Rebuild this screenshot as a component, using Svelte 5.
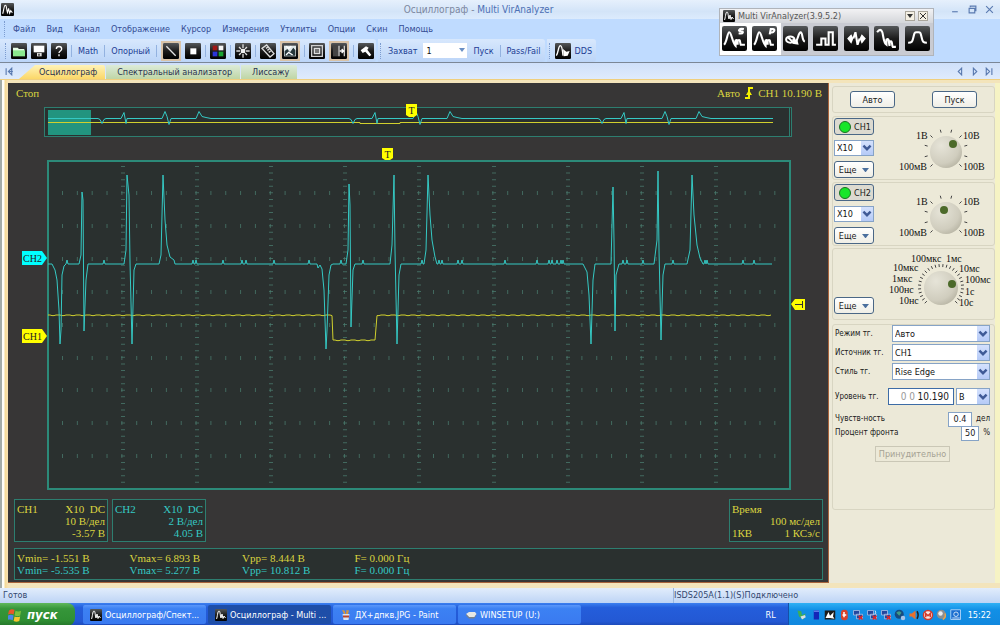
<script lang="ts">
interface Shape {
	d: string;
	fill?: string;
	stroke?: string;
}

interface Tool {
	icon: string;
	label: string;
	active?: boolean;
}

type Point = [number, number];

const menu = ["Файл", "Вид", "Канал", "Отображение", "Курсор", "Измерения", "Утилиты", "Опции", "Скин", "Помощь"];

// Icon shapes on a 24x24 tile
const icons: Record<string, Shape[]> = {
	open: [
		{ d: "M3 7h7l2 2h8v3H3z", fill: "#e9ffe9" },
		{ d: "M3 11h18v9H3z", fill: "#8be88f" },
	],
	save: [
		{ d: "M4 4h16v10H4z", fill: "#fff" },
		{ d: "M9 15h7v5H9z", fill: "#ddd" },
		{ d: "M11 16h2v3h-2z", fill: "#222" },
	],
	help: [{ d: "M8 9c0-5 8-5 8 0 0 3-4 3-4 6M12 17v3", stroke: "#fff" }],
	line: [{ d: "M5 5l14 14", stroke: "#e4e4e4" }],
	dot: [{ d: "M8 8h9v9H8z", fill: "#fff" }],
	colors: [
		{ d: "M4 4h7v7H4z", fill: "#a01818" },
		{ d: "M13 4h7v7h-7z", fill: "#f4f4f4" },
		{ d: "M4 13h7v7H4z", fill: "#2b35d8" },
		{ d: "M13 13h7v7h-7z", fill: "#19a332" },
	],
	cross: [
		{ d: "M12 2v6M12 16v6M2 12h6M16 12h6M6 6l3 3M18 6l-3 3M6 18l3-3M18 18l-3-3", stroke: "#ddd" },
		{ d: "M9 9h6v6H9z", fill: "#eee" },
	],
	ruler: [
		{ d: "M10 3l11 13-6 5L3 8z", stroke: "#ddd" },
		{ d: "M9 8l3-2M11 11l3-2M13 14l3-2", stroke: "#ddd" },
	],
	picture: [
		{ d: "M3 4h18v16H3z", fill: "#dfe8ea" },
		{ d: "M4 12l4-3 4 5 5-7 3 4v8H4z", fill: "#26363a" },
		{ d: "M6 5l4 3 4-3M6 18l4-4 6 4", stroke: "#fff" },
	],
	frame: [
		{ d: "M4 4h16v16H4z", stroke: "#cfcfcf" },
		{ d: "M8 8h8v8H8z", fill: "#777", stroke: "#ddd" },
	],
	door: [
		{ d: "M3 4h8v16H3z", fill: "#444" },
		{ d: "M12 4v16M20 4v16", stroke: "#ccc" },
		{ d: "M13 12h6M16 9l3 3-3 3", stroke: "#fff" },
	],
	hammer: [{ d: "M4 11l8-6 4 2-2 3 6 8-3 2-6-7-4 2z", fill: "#fff" }],
	logo: [{ d: "M3 20C5 16 5 4 8 4s2 10 4 14l2-8 2 9 2-5 3 4", stroke: "#fff" }],
	dds: [
		{ d: "M2 19C5 15 5 4 8 4s3 8 4 15", stroke: "#fff" },
		{ d: "M12 9l5 4 5-1-3 7-6 1z", fill: "#fff" },
	],
	specS: [
		{ d: "M2 18c3-3 3-12 5-12s3 10 6 13v-5c2-2 2 2 2 4v-4c3-2 2 2 3 4h4", stroke: "#fff" },
		{ d: "M21 3c-5-1-6 2-3 2s3 3-2 2", stroke: "#fff" },
	],
	specP: [
		{ d: "M2 18c3-3 3-12 5-12s3 10 6 13v-5c2-2 2 2 2 4v-4c3-2 2 2 3 4h3", stroke: "#fff" },
		{ d: "M17 8l1-5h2c3 0 1 4-2 3", stroke: "#fff" },
	],
	lissajous: [
		{ d: "M3 13a4 3 0 1 1 8 0 4 3 0 1 1-8 0M5 11l4 4", stroke: "#fff" },
		{ d: "M12 15c3-2 2-8 5-9 2 0 1 8 4 9", stroke: "#fff" },
		{ d: "M9 12l5 2 1 4-6-1z", fill: "#fff" },
	],
	pulse: [{ d: "M3 18h5v-6h4v6h3V6h4v12h3", stroke: "#fff" }],
	burst: [
		{ d: "M9 12l2-6 2 12 2-6", stroke: "#fff" },
		{ d: "M3 12l4-4 2 4-2 5zM15 12l2-4 4 4-4 5z", fill: "#fff" },
	],
	decay: [{ d: "M3 6c2-3 4-3 5 0s1 10 4 12v-5c3-2 2 4 3 6v-4c3-2 2 4 3 5h3", stroke: "#fff" }],
	hump: [{ d: "M3 16c4 0 4-1 5-5s1-5 3-5h2c2 0 2 1 3 5s1 5 5 5", stroke: "#fff" }],
};

const toolGroups: Tool[][] = [
	[{ icon: "line", label: "Линии", active: true }, { icon: "dot", label: "Точки" }],
	[{ icon: "colors", label: "Цвета" }],
	[{ icon: "cross", label: "Центр" }],
	[{ icon: "ruler", label: "Линейка" }, { icon: "picture", label: "Обзор", active: true }],
	[{ icon: "frame", label: "Экран" }, { icon: "door", label: "Панель", active: true }],
	[{ icon: "hammer", label: "Настройка" }],
];

const modes = ["specS", "specP", "lissajous", "pulse", "burst", "decay", "hump"];

const channels = [
	{ name: "CH1", dot: [63, 27] },
	{ name: "CH2", dot: [54, 27] },
];

const boxes = [
	{ name: "CH1", scale: "10 В/дел", offset: "-3.57 В", tone: "yellow" },
	{ name: "CH2", scale: "2 В/дел", offset: "4.05 В", tone: "cyan" },
];

const measures = [
	{ tone: "yellow", cells: ["Vmin= -1.551 В", "Vmax= 6.893 В", "Vpp= 8.444 В", "F= 0.000 Гц"] },
	{ tone: "cyan", cells: ["Vmin= -5.535 В", "Vmax= 5.277 В", "Vpp= 10.812 В", "F= 0.000 Гц"] },
];

const timeLabels = [
	{ text: "100мкс", x: 27, y: 13 },
	{ text: "1мс", x: 62, y: 13 },
	{ text: "10мкс", x: 9, y: 22 },
	{ text: "10мс", x: 75, y: 23 },
	{ text: "1мкс", x: 8, y: 33 },
	{ text: "100мс", x: 81, y: 34 },
	{ text: "100нс", x: 5, y: 44 },
	{ text: "1с", x: 81, y: 46 },
	{ text: "10нс", x: 15, y: 55 },
	{ text: "10с", x: 75, y: 57 },
];

const tasks = [
	{ text: "Осциллограф/Спект...", icon: "logo" },
	{ text: "Осциллограф - Multi ...", icon: "logo", active: true },
	{ text: "ДХ+дпкв.JPG - Paint", icon: "paint" },
	{ text: "WINSETUP (U:)", icon: "drive" },
];

let attenuation = $state(["X10", "X10"]);
let mode = $state("Авто");
let source = $state("CH1");
let edge = $state("Rise Edge");
let level = $state("10.190");
let unit = $state("В");
let sensitivity = $state("0.4");
let percent = $state("50");
let capture = $state("1");

// CH2 trace: key points, small noise blips are merged in below
const pulses: Point[] = [
	[48, 264], [52, 264], [55, 270], [57, 280], [59, 310], [60, 344], [61, 330], [62, 275], [64, 266], [66, 264],
	[79, 264], [81, 255], [82, 192], [83, 200], [84, 331], [86, 280], [88, 264],
	[124, 264], [126, 250], [127, 175], [129, 195], [130, 262], [132, 344], [134, 270], [136, 264],
	[159, 264], [161, 255], [163, 175], [165, 220], [167, 245], [170, 257], [174, 260], [175, 264],
	[317, 264], [318, 268], [320, 265], [322, 269], [324, 290], [326, 349], [327, 330], [329, 275], [331, 265], [333, 264],
	[346, 264], [348, 250], [349, 184], [350, 205], [351, 327], [353, 270], [355, 264],
	[390, 264], [392, 245], [394, 175], [395, 250], [397, 344], [399, 275], [401, 264],
	[424, 264], [426, 250], [428, 175], [430, 215], [432, 240], [435, 257], [437, 264],
	[583, 264], [587, 272], [589, 295], [591, 344], [593, 280], [595, 264],
	[611, 264], [613, 187], [614, 240], [615, 331], [616, 275], [619, 264],
	[654, 264], [657, 240], [658, 171], [659, 250], [661, 340], [663, 275], [665, 264],
	[687, 264], [690, 250], [692, 175], [694, 215], [697, 245], [700, 258], [703, 264],
	[772, 264],
];
const blips = [67, 104, 193, 196, 223, 242, 246, 274, 309, 341, 363, 422, 439, 442, 458, 462, 505, 537, 549, 552, 557, 561, 563, 623, 627, 643, 673, 705, 707, 743, 754];

function toPath(points: Point[]): string {
	return "M" + points.map(([x, y]) => `${x} ${y}`).join("L");
}

const ch2Path = toPath(
	[...pulses, ...blips.flatMap((x): Point[] => [[x - 1, 264], [x, 260], [x + 1, 264]])].sort((a, b) => a[0] - b[0])
);

function noisy(from: number, to: number, y: number): Point[] {
	const out: Point[] = [];
	for (let x = from; x <= to; x += 2) out.push([x, y + ((x * 7) % 5 > 2 ? 0.6 : 0)]);
	return out;
}

const ch1Path = toPath([...noisy(48, 332, 315), ...noisy(333, 376, 340), ...noisy(377, 772, 315)]);

// Overview repeats the same burst with a period of about 250
const overviewPath =
	"M48 118.5" +
	[102, 353, 602]
		.map(
			(x) =>
				`H${x - 4}l2 1l2 4l2-4l2-1H${x + 19}l3-6l2 11l1-5H${x + 60}l3-7l2 5l2 8l2-6H${x + 94}l3-7l3 5l4 1l5 1`
		)
		.join("") +
	"H773";

const columns = Array.from({ length: 9 }, (_, i) => Math.round(122.5 + i * 74.2));
const rows = Array.from({ length: 9 }, (_, i) => Math.round(193 + i * 32.9));

function ticks(cx: number, cy: number, count: number, inner: number, outer: number): string {
	return Array.from({ length: count }, (_, i) => {
		const a = ((-225 + (270 * i) / (count - 1)) * Math.PI) / 180;
		const [c, s] = [Math.cos(a), Math.sin(a)];
		return `M${cx + c * inner} ${cy + s * inner}L${cx + c * outer} ${cy + s * outer}`;
	}).join("");
}
</script>

{#snippet tile(name: string)}
	<svg class="tile" viewBox="0 0 24 24" aria-hidden="true">
		<rect width="24" height="24" rx="2" fill="url(#tile-dark)" />
		{#each icons[name] as shape, i (i)}
			<path d={shape.d} fill={shape.fill ?? "none"} stroke={shape.stroke ?? "none"} stroke-width="2" />
		{/each}
	</svg>
{/snippet}

{#snippet chevron()}
	<span class="chevron" aria-hidden="true">
		<svg viewBox="0 0 10 10"><path d="M2 3l3 3 3-3" /></svg>
	</span>
{/snippet}

{#snippet more()}
	<button class="xp-button more">Еще <svg viewBox="0 0 8 5" aria-hidden="true"><path d="M0 0h8L4 5z" /></svg></button>
{/snippet}

<svg class="defs" aria-hidden="true">
	<defs>
		<linearGradient id="tile-dark" x2="0" y2="1">
			<stop offset="0" stop-color="#55585a" />
			<stop offset="0.5" stop-color="#1c1c1c" />
			<stop offset="1" stop-color="#000" />
		</linearGradient>
		<radialGradient id="knob" cx="0.35" cy="0.3" r="0.8">
			<stop offset="0" stop-color="#e6e4d8" />
			<stop offset="0.7" stop-color="#d0cdbe" />
			<stop offset="1" stop-color="#b4b1a0" />
		</radialGradient>
	</defs>
</svg>

<div class="window">
	<header class="titlebar">
		{@render tile("logo")}
		<h1><span>Осциллограф -</span> Multi VirAnalyzer</h1>
		<div class="window-buttons">
			<button aria-label="Свернуть"><svg viewBox="0 0 8 8"><path d="M1 6h5" /></svg></button>
			<button aria-label="Развернуть"><svg viewBox="0 0 8 8"><path d="M2 2V1h5v4H6M1 3h5v4H1z" /></svg></button>
			<button aria-label="Закрыть"><svg viewBox="0 0 8 8"><path d="M1 1l6 6M7 1L1 7" /></svg></button>
		</div>
	</header>

	<nav class="menubar">
		<span class="grip"></span>
		{#each menu as item (item)}
			<button>{item}</button>
		{/each}
	</nav>

	<div class="toolbars">
		<div class="toolbar">
			<span class="grip"></span>
			<button class="tool" aria-label="Открыть">{@render tile("open")}</button>
			<button class="tool" aria-label="Сохранить">{@render tile("save")}</button>
			<button class="tool" aria-label="Справка">{@render tile("help")}</button>
			<span class="sep"></span>
			<button class="text-tool">Math</button>
			<span class="sep"></span>
			<button class="text-tool">Опорный</button>
			{#each toolGroups as group, i (i)}
				<span class="sep"></span>
				{#each group as tool (tool.icon)}
					<button class="tool" class:active={tool.active} aria-label={tool.label}>{@render tile(tool.icon)}</button>
				{/each}
			{/each}
		</div>
		<div class="toolbar">
			<span class="grip"></span>
			<label class="text-tool" for="capture">Захват</label>
			<span class="select capture">
				<select id="capture" bind:value={capture}>
					<option>1</option>
					<option>2</option>
				</select>
				<svg viewBox="0 0 8 5" aria-hidden="true"><path d="M1 0h6L4 4z" /></svg>
			</span>
			<button class="text-tool">Пуск</button>
			<span class="sep"></span>
			<button class="text-tool">Pass/Fail</button>
		</div>
		<div class="toolbar">
			<span class="grip"></span>
			<button class="tool" aria-label="Генератор">{@render tile("dds")}</button>
			<button class="dds">DDS</button>
		</div>
	</div>

	<div class="tabs">
		<button class="nav" aria-label="В начало"><svg viewBox="0 0 8 8"><path d="M1 1v6M6 1L3 4l3 3zM3 4h4" /></svg></button>
		<div class="tab-list" role="tablist">
			<button class="tab current" role="tab" aria-selected="true">Осциллограф</button>
			<button class="tab" role="tab" aria-selected="false">Спектральный анализатор</button>
			<button class="tab" role="tab" aria-selected="false">Лиссажу</button>
		</div>
		<button class="nav" aria-label="Назад"><svg viewBox="0 0 8 8"><path d="M5 1L2 4l3 3z" /></svg></button>
		<button class="nav" aria-label="Вперёд"><svg viewBox="0 0 8 8"><path d="M3 1l3 3-3 3z" /></svg></button>
		<button class="nav" aria-label="В конец"><svg viewBox="0 0 8 8"><path d="M7 1v6M2 1l3 3-3 3z" /></svg></button>
	</div>

	<main class="workspace">
		<section class="scope">
			<div class="scope-head">
				<span>Стоп</span>
				<span class="trigger">
					Авто
					<svg viewBox="0 0 10 12" aria-hidden="true">
						<path d="M1 11h4V1h4" />
						<path class="head" d="M2 8l3-5 3 5z" />
					</svg>
					CH1 10.190 В
				</span>
			</div>

			<svg class="plot" viewBox="8 102 820 390" role="img" aria-label="Осциллограмма">
				<rect class="plot-bg thin" x="44.5" y="107.5" width="747" height="29" />
				<path class="thin" d="M789.5 108v28" />
				<rect x="48" y="110" width="43" height="25" fill="#22947f" />
				<path class="ch1" d="M48 122.500H360V123.500H400V122.500H773" />
				<path class="ch2" d={overviewPath} />

				<rect class="plot-bg thick" x="48" y="161" width="742" height="328" />
				{#each columns as x (x)}
					<path class="grid" d="M{x} 166V488" stroke-width="4" stroke-dasharray="1 5.58" />
				{/each}
				{#each rows as y (y)}
					<path class="grid" d="M62 {y}H780" stroke-width="4" stroke-dasharray="1 13.84" />
				{/each}
				<path class="ch1" d={ch1Path} />
				<path class="ch2" d={ch2Path} />

				<g class="tag yellow-tag">
					<path d="M406 104h11v11l-3 2h-5l-3-2z" />
					<text x="411.500" y="114" text-anchor="middle">T</text>
					<path d="M382 148h11v10l-3 2h-5l-3-2z" />
					<text x="387.500" y="158" text-anchor="middle">T</text>
					<path d="M22 329h20l5 7-5 7H22z" />
					<text x="23" y="340">CH1</text>
					<path d="M791 304l4-5h10v11h-10z" />
					<path d="M795 304.500h7M802.500 301v7" stroke="#333" />
				</g>
				<g class="tag cyan-tag">
					<path d="M22 251h20l5 7-5 7H22z" />
					<text x="23" y="262">CH2</text>
				</g>
			</svg>

			<div class="info">
				{#each boxes as box (box.name)}
					<div class="info-box {box.tone}">
						<div><span>{box.name}</span><span class="coupling">X10&nbsp; DC</span></div>
						<div class="right">{box.scale}</div>
						<div class="right">{box.offset}</div>
					</div>
				{/each}
				<div class="info-box time">
					<div>Время</div>
					<div class="right">100 мс/дел</div>
					<div><span>1КВ</span><span>1 КСэ/с</span></div>
				</div>
			</div>

			<div class="measures">
				<table>
					<tbody>
						{#each measures as row (row.tone)}
							<tr class={row.tone}>
								{#each row.cells as cell (cell)}
									<td>{cell}</td>
								{/each}
							</tr>
						{/each}
					</tbody>
				</table>
			</div>
		</section>

		<aside class="panel">
			<div class="group run">
				<button class="xp-button">Авто</button>
				<button class="xp-button">Пуск</button>
			</div>

			{#each channels as ch, i (ch.name)}
				<div class="group knob-group">
					<div class="controls">
						<button class="xp-button led"><i></i>{ch.name}</button>
						<span class="select">
							<select aria-label="Делитель {ch.name}" bind:value={attenuation[i]}>
								<option>X1</option>
								<option>X10</option>
							</select>
							{@render chevron()}
						</span>
						{@render more()}
					</div>
					<svg class="knob" viewBox="0 0 104 62" aria-hidden="true">
						<path class="marks" d={ticks(56, 34, 10, 19, 22)} />
						<circle cx="56" cy="35" r="16" fill="url(#knob)" />
						<circle cx={ch.dot[0]} cy={ch.dot[1]} r="4" fill="#4c6a2a" />
						<text x="26" y="22">1В</text>
						<text x="73" y="22">10В</text>
						<text x="9" y="53">100мВ</text>
						<text x="73" y="53">100В</text>
					</svg>
				</div>
			{/each}

			<div class="group knob-group timebase">
				<div class="controls">{@render more()}</div>
				<svg class="knob" viewBox="0 0 110 68" aria-hidden="true">
					<path class="marks" d={ticks(57, 38, 28, 20, 23)} />
					<circle cx="57" cy="39" r="17" fill="url(#knob)" />
					<circle cx="68" cy="35" r="4" fill="#4c6a2a" />
					{#each timeLabels as label (label.text)}
						<text x={label.x} y={label.y}>{label.text}</text>
					{/each}
				</svg>
			</div>

			<div class="group settings">
				<div class="field">
					<label for="mode">Режим тг.</label>
					<span class="select wide">
						<select id="mode" bind:value={mode}><option>Авто</option><option>Норма</option></select>
						{@render chevron()}
					</span>
				</div>
				<div class="field">
					<label for="source">Источник тг.</label>
					<span class="select wide">
						<select id="source" bind:value={source}><option>CH1</option><option>CH2</option></select>
						{@render chevron()}
					</span>
				</div>
				<div class="field">
					<label for="edge">Стиль тг.</label>
					<span class="select wide">
						<select id="edge" bind:value={edge}><option>Rise Edge</option><option>Fall Edge</option></select>
						{@render chevron()}
					</span>
				</div>
				<div class="field level-row">
					<label for="level">Уровень тг.</label>
					<span class="level"><span>0 0</span><input id="level" bind:value={level} /></span>
					<span class="select unit">
						<select aria-label="Единица" bind:value={unit}><option>В</option><option>мВ</option></select>
						{@render chevron()}
					</span>
				</div>
				<div class="field small">
					<label for="sens">Чувств-ность</label>
					<input id="sens" class="sens" bind:value={sensitivity} />
					<span>дел</span>
				</div>
				<div class="field small">
					<label for="percent">Процент фронта</label>
					<input id="percent" class="percent" bind:value={percent} />
					<span>%</span>
				</div>
				<button class="force" disabled>Принудительно</button>
			</div>
		</aside>
	</main>

	<footer class="status">
		<span>Готов</span>
		<span class="device">ISDS205A(1.1)(S)Подключено</span>
	</footer>

	<div class="palette">
		<div class="palette-head">
			{@render tile("logo")}
			<span>Multi VirAnalyzer(3.9.5.2)</span>
			<button aria-label="Меню"><svg viewBox="0 0 8 8"><path d="M1 2h6L4 6z" fill="#333" /></svg></button>
			<button aria-label="Закрыть"><svg viewBox="0 0 8 8"><path d="M1 1l6 6M7 1L1 7" stroke="#333" /></svg></button>
		</div>
		<div class="palette-tools">
			{#each modes as name, i (name)}
				<button class:on={i < 2} aria-label={name}>{@render tile(name)}</button>
			{/each}
		</div>
	</div>
</div>

<div class="taskbar">
	<button class="start">
		<svg viewBox="0 0 16 16" aria-hidden="true">
			<path d="M1 4c2-2 4-2 6-1L6 8C4 7 2 7 0 8z" fill="#e8562a" />
			<path d="M8 4c2 1 4 1 6 0l-1 5c-2 1-4 1-6 0z" fill="#7cc03c" />
			<path d="M0 9c2-1 4-1 6 0l-1 5c-2-1-4-1-6 0z" fill="#4a86e8" />
			<path d="M7 10c2 1 4 1 6 0l-1 5c-2 1-4 1-6 0z" fill="#f5c52e" />
		</svg>
		пуск
	</button>
	<div class="tasks">
		{#each tasks as task (task.text)}
			<button class="task" class:active={task.active}>
				{#if task.icon === "logo"}
					{@render tile("logo")}
				{:else if task.icon === "paint"}
					<svg class="tile" viewBox="0 0 24 24" aria-hidden="true">
						<path d="M5 10h14l-2 12H7z" fill="#d8e4f0" />
						<path d="M8 10L4 2l5 1 2 7zM12 10l1-8 5 1-2 7z" fill="#d8963a" />
						<path d="M6 13h12v4H6z" fill="#b8452c" />
					</svg>
				{:else}
					<svg class="tile" viewBox="0 0 24 24" aria-hidden="true">
						<path d="M2 10l6-4h12l3 4-4 6H8z" fill="#e8e8e4" />
						<path d="M2 10l6 6h11l4-6-1 4-4 5H8l-6-6z" fill="#7c8288" />
					</svg>
				{/if}
				<span>{task.text}</span>
			</button>
		{/each}
	</div>
	<span class="lang">RL</span>
	<div class="tray">
		<svg viewBox="0 0 16 16"><path d="M2 2l5 1 1 5 5-2-3 8-6-4z" fill="#3fae55" /><path d="M6 10l6-2 1 3-5 3z" fill="#d9dfe2" /></svg>
		<svg viewBox="0 0 16 16"><path d="M5 2h7v12H5z" fill="#1426b8" /><path d="M5 2h7v2H5z" fill="#5b78e8" /></svg>
		<svg viewBox="0 0 16 16"><path d="M1 2h14v12H1z" fill="#1c1c1c" /><path d="M2 12l4-8 2 5 5-5-1 6 2 3-6-1z" fill="#fff" /></svg>
		<svg viewBox="0 0 16 16"><rect x="4" y="1" width="9" height="14" rx="4" fill="#d8432c" /><path d="M8 4v7M6 8h5" stroke="#fff" stroke-width="2" /></svg>
		{#each [0, 1, 2] as n (n)}
			<svg viewBox="0 0 16 16">
				<path d="M2 2h8v6H2zM6 7h8v6H6z" fill="#24479e" stroke="#b5c5e5" />
				<path d="M9 9l5 5M14 9l-5 5" stroke="#e02626" stroke-width="2" />
				{#if n === 1}
					<path d="M12 2q2 2 0 5" stroke="#fff" fill="none" />
				{/if}
			</svg>
		{/each}
		<svg viewBox="0 0 16 16"><circle cx="7" cy="7" r="6" fill="#174b80" /><path d="M3 5q4-4 7 0l-3 4z" fill="#3f9c86" /><circle cx="12" cy="12" r="3" fill="#a9c4e8" /></svg>
		<svg viewBox="0 0 16 16"><path d="M2 6h3l5-4v12l-5-4H2z" fill="#e8702c" /><path d="M12 3q3 5 0 10" stroke="#222" stroke-width="2" fill="none" /></svg>
		<svg viewBox="0 0 16 16"><circle cx="8" cy="8" r="6" fill="#fbe9e5" stroke="#d43a2c" stroke-width="2" /><path d="M5 11V6l3 3 3-3v5" stroke="#d43a2c" stroke-width="2" fill="none" /></svg>
		<svg viewBox="0 0 16 16"><circle cx="7" cy="7" r="6" fill="#8a8e92" /><circle cx="6" cy="6" r="3" fill="#e9ebee" /><path d="M12 6q2 5-3 8" stroke="#e8a44a" stroke-width="2" fill="none" /></svg>
		<svg viewBox="0 0 16 16"><path d="M1 1h13v13H1z" fill="#1b6fd0" stroke="#cfe6ff" /><circle cx="8" cy="7" r="3" fill="none" stroke="#fff" /><path d="M3 12h10" stroke="#fff" /></svg>
		<time>15:22</time>
	</div>
</div>

<style>
	:global(body) {
		margin: 0;
		background: #ece9d8;
	}

	:global(#app) {
		font-family: "DejaVu Sans Condensed", "DejaVu Sans", sans-serif;
		font-size: 9px;
		line-height: 12px;
	}

	* {
		box-sizing: border-box;
	}

	button,
	input,
	select {
		margin: 0;
		padding: 0;
		border: 0;
		background: none;
		color: inherit;
		font: inherit;
	}

	button {
		white-space: nowrap;
	}

	.defs {
		position: absolute;
		width: 0;
		height: 0;
	}

	.tile {
		display: block;
		flex: none;
		width: 16px;
		height: 16px;
	}

	.window {
		position: relative;
		background: #bfdbff;
		color: #344c94;
	}

	/* Title and menu */
	.titlebar {
		display: flex;
		align-items: center;
		height: 19px;
		padding: 0 6px 0 1px;
		background: linear-gradient(#e6f0fc, #d3e4f8 60%, #dcebfd);
	}

	.titlebar .tile {
		width: 13px;
		height: 13px;
	}

	h1 {
		flex: 1;
		margin: 0;
		padding-right: 8px;
		font-size: 10px;
		font-weight: normal;
		text-align: center;
		color: #4d70b4;
	}

	h1 span {
		color: #7c879f;
	}

	.window-buttons {
		display: flex;
		gap: 8px;
	}

	.window-buttons svg,
	.nav svg {
		display: block;
		width: 9px;
		height: 9px;
		fill: none;
		stroke: #5a7ab0;
	}

	.menubar {
		display: flex;
		align-items: center;
		gap: 11px;
		height: 20px;
		padding-left: 4px;
	}

	.menubar .grip {
		margin-right: -4px;
	}

	.grip {
		width: 2px;
		height: 16px;
		border-left: 1px dotted #7c9cd0;
	}

	/* Toolbars */
	.toolbars {
		display: flex;
		gap: 2px;
		height: 24px;
		border-bottom: 1px solid #7b8796;
		color: #1c3c94;
	}

	.toolbar {
		display: flex;
		align-items: center;
		gap: 4px;
		padding: 0 2px;
		border-radius: 0 3px 3px 0;
		background: linear-gradient(#d8e8fd, #c9defa 50%, #bcd5f8);
	}

	.toolbar:first-child {
		padding-left: 5px;
	}

	.tool.active {
		margin: 0 2px;
		outline: 2px solid #d9c3a8;
	}

	.sep {
		width: 1px;
		height: 12px;
		background: #93b2e0;
	}

	.text-tool {
		padding: 0 2px;
	}

	.dds {
		padding-right: 2px;
	}

	.select {
		position: relative;
		display: flex;
		align-items: center;
		height: 15px;
		border: 1px solid #86a3c6;
		background: #fff;
		color: #111;
	}

	.select select {
		flex: 1;
		width: 100%;
		height: 100%;
		padding-left: 2px;
		appearance: none;
		outline: none;
	}

	.chevron {
		position: absolute;
		right: 0;
		display: flex;
		align-items: center;
		width: 12px;
		height: 100%;
		background: linear-gradient(#d4e1fd, #b5caf7);
		pointer-events: none;
	}

	.chevron svg {
		width: 12px;
		fill: none;
		stroke: #3f5a96;
		stroke-width: 2;
	}

	.capture {
		width: 44px;
		border-color: #fff;
	}

	.capture svg {
		width: 8px;
		fill: #6a8fc4;
	}

	/* Tabs */
	.tabs {
		display: flex;
		align-items: flex-end;
		gap: 5px;
		height: 16px;
		padding: 0 7px 0 5px;
		background: linear-gradient(#cfe0fa, #dfebfc);
	}

	.nav {
		align-self: center;
	}

	.tab-list {
		display: flex;
		flex: 1;
		gap: 1px;
	}

	.tab {
		height: 14px;
		padding: 0 8px 0 11px;
		border-radius: 0 2px 0 0;
		background: linear-gradient(#dcebd8, #bfd6a6);
		color: #2b3350;
	}

	.tab.current {
		padding: 0 8px 0 20px;
		background: linear-gradient(#fff3b8, #fbd768);
		clip-path: polygon(16px 0, 100% 0, 100% 100%, 0 100%);
	}

	/* Workspace */
	.workspace {
		display: grid;
		grid-template-columns: minmax(0, 1fr) 171px;
		padding: 3px 0 5px 8px;
		background: linear-gradient(90deg, #a3aca8 2px, #fdfdf8 2px, #fdfdf8 4px, #f4d994 5px, #f6e2b4 8px, #f3e4bb 9px);
		border-top: 1px solid #f0cf7d;
	}

	.scope {
		padding: 0 5px 2px 0;
		border-right: 1px solid #a8643c;
		border-bottom: 1px solid #a8643c;
		background: #373636;
		color: #dad440;
		font-family: "Liberation Serif", serif;
		font-size: 11px;
	}

	.scope-head {
		display: flex;
		justify-content: space-between;
		align-items: center;
		height: 19px;
		padding: 0 1px 0 8px;
	}

	.trigger {
		display: flex;
		gap: 4px;
		align-items: center;
	}

	.trigger svg {
		width: 10px;
		height: 12px;
		fill: none;
		stroke: #f4f000;
		stroke-width: 2;
	}

	.trigger .head {
		fill: #f4f000;
		stroke: none;
	}

	.plot {
		display: block;
		width: calc(100% + 5px);
	}

	.plot-bg {
		fill: #2a302f;
	}

	.thin {
		stroke: #2d7e70;
	}

	.thick {
		stroke: #2c8a79;
		stroke-width: 2;
	}

	.grid {
		fill: none;
		stroke: #4d8274;
		opacity: 0.7;
	}

	.ch1,
	.ch2 {
		fill: none;
		stroke: #d0d02e;
		stroke-width: 1;
	}

	.ch2 {
		stroke: #35c9c4;
	}

	.tag text {
		fill: #222;
		font-family: "Liberation Serif", serif;
		font-size: 10px;
	}

	.yellow-tag path {
		fill: #ff0;
	}

	.cyan-tag path {
		fill: #0ff;
	}

	.yellow {
		color: #dad440;
	}

	.cyan {
		color: #35c9c4;
	}

	.info {
		display: flex;
		gap: 4px;
		padding: 7px 0 6px 6px;
	}

	.info-box {
		width: 94px;
		height: 43px;
		padding: 3px 2px;
		border: 1px solid #2d7e70;
		background: #2a302f;
	}

	.info-box div {
		display: flex;
		justify-content: space-between;
	}

	.info-box .right {
		justify-content: flex-end;
	}

	.time {
		margin-left: auto;
	}

	.measures {
		margin-left: 6px;
		padding: 3px 2px;
		border: 1px solid #2d7e70;
		background: #2a302f;
	}

	table {
		width: 450px;
		table-layout: fixed;
		border-collapse: collapse;
	}

	td {
		padding: 0;
	}

	/* Control panel */
	.panel {
		display: flex;
		flex-direction: column;
		gap: 2px;
		padding: 3px 0 0 3px;
		border-right: 5px solid #f6f3c4;
		background: #ece9d8;
		color: #1a1a1a;
	}

	.group {
		border: 1px solid #d8d5c2;
		border-radius: 3px;
	}

	.run {
		display: flex;
		justify-content: space-between;
		margin-bottom: 1px;
		padding: 4px 17px;
	}

	.xp-button {
		height: 17px;
		border: 1px solid #4a6786;
		border-radius: 3px;
		background: linear-gradient(#fff, #efeee6);
	}

	.run .xp-button {
		width: 45px;
	}

	.knob-group {
		display: flex;
		justify-content: space-between;
		height: 64px;
		padding-left: 1px;
	}

	.controls {
		display: flex;
		flex: none;
		flex-direction: column;
		justify-content: space-between;
		width: 40px;
		padding: 1px 0;
	}

	.controls .select {
		height: 16px;
	}

	.led {
		display: flex;
		align-items: center;
		gap: 3px;
		padding-left: 4px;
		background: #dcdad0;
	}

	.led i {
		width: 12px;
		height: 12px;
		border: 1px solid #1c6f24;
		border-radius: 50%;
		background: #18e62a;
	}

	.more svg {
		width: 7px;
		margin-left: 3px;
		fill: #4a6f9e;
		vertical-align: middle;
	}

	.knob {
		flex: none;
		width: 104px;
		height: 62px;
	}

	.knob text {
		fill: #111;
		font-family: "Liberation Serif", serif;
		font-size: 10px;
	}

	.marks {
		stroke: #444;
	}

	.timebase {
		height: 72px;
	}

	.timebase .knob {
		width: 110px;
		height: 68px;
	}

	.timebase .controls {
		justify-content: flex-end;
		padding-bottom: 5px;
	}

	.settings {
		display: flex;
		flex-direction: column;
		gap: 2px;
		height: 186px;
		margin-top: 2px;
		padding: 0 4px 0 2px;
	}

	.field {
		display: flex;
		align-items: center;
		font-size: 8px;
	}

	.field label {
		flex: 1;
		white-space: nowrap;
	}

	.wide {
		width: 98px;
	}

	.field .select,
	.level {
		height: 17px;
		font-size: 9px;
	}

	.level-row {
		margin: 6px 0;
	}

	.level {
		display: flex;
		align-items: center;
		justify-content: flex-end;
		width: 66px;
		margin-right: 2px;
		padding-right: 4px;
		border: 1px solid #3d6ca6;
		background: #fff;
		font-size: 10px;
	}

	.level span {
		color: #999;
	}

	.level input {
		width: 34px;
		outline: none;
		text-align: right;
	}

	.unit {
		width: 34px;
	}

	.small {
		gap: 4px;
		height: 12px;
	}

	.small input {
		width: 24px;
		height: 15px;
		border: 1px solid #86a3c6;
		background: #fff;
		font-size: 9px;
		text-align: center;
	}

	.small .percent {
		width: 18px;
	}

	.force {
		align-self: center;
		height: 16px;
		margin-top: 5px;
		padding: 0 3px;
		border: 1px solid #cac7b6;
		color: #a5a294;
	}

	/* Status bar */
	.status {
		display: flex;
		height: 15px;
		padding-left: 3px;
		background: linear-gradient(#e2edfc, #bdd4f5);
		color: #33486f;
		line-height: 15px;
	}

	.device {
		width: 327px;
		margin-left: auto;
		border-left: 1px solid #9cb8e0;
	}

	/* Floating module palette */
	.palette {
		position: absolute;
		top: 8px;
		right: 66px;
		width: 215px;
		border: 1px solid #b0b4ba;
		background: #c9cbd2;
		color: #555;
	}

	.palette-head {
		display: flex;
		align-items: center;
		gap: 3px;
		height: 14px;
		padding: 0 5px 0 3px;
		background: linear-gradient(#f2f2f4, #d4d6da);
	}

	.palette-head span {
		flex: 1;
	}

	.palette-head .tile {
		width: 12px;
		height: 12px;
	}

	.palette-head button {
		width: 10px;
		height: 10px;
		border: 1px solid #aaa69c;
		background: #f5f0e4;
	}

	.palette-head button svg {
		display: block;
		width: 8px;
	}

	.palette-tools {
		display: flex;
	}

	.palette-tools button {
		flex: 1;
		padding: 3px 3px 4px 2px;
	}

	.palette-tools button.on {
		background: #fff;
	}

	.palette-tools .tile {
		width: 25px;
		height: 25px;
	}

	/* Taskbar */
	.taskbar {
		display: flex;
		align-items: stretch;
		height: 23px;
		background: linear-gradient(#3b80f0, #245edb 20%, #2358d4 80%, #1c48b4);
		color: #fff;
	}

	.start {
		display: flex;
		align-items: center;
		gap: 4px;
		width: 75px;
		padding-left: 8px;
		border-radius: 0 8px 8px 0;
		background: linear-gradient(#5fb85c, #36963a 25%, #2f8f33 75%, #24752a);
		font-size: 13px;
		font-style: italic;
		font-weight: bold;
	}

	.start svg {
		width: 15px;
		height: 15px;
	}

	.tasks {
		display: flex;
		flex: 1;
		gap: 2px;
		min-width: 0;
		padding: 2px 0 2px 8px;
	}

	.task {
		display: flex;
		align-items: center;
		gap: 3px;
		width: 123px;
		padding: 0 7px;
		border-radius: 2px;
		background: linear-gradient(#5a97fa, #3c81f3 20%, #3a7af0);
	}

	.task.active {
		background: #1e4ea8;
	}

	.task .tile {
		width: 12px;
		height: 12px;
	}

	.lang {
		align-self: center;
		margin-right: 12px;
	}

	.tray {
		display: flex;
		align-items: center;
		gap: 2px;
		padding: 0 9px 0 7px;
		border-left: 1px solid #1450a8;
		background: linear-gradient(#2fb0f5, #1290e6 30%, #1187de);
	}

	.tray svg {
		width: 12px;
		height: 12px;
	}

	time {
		margin-left: 4px;
	}
</style>
